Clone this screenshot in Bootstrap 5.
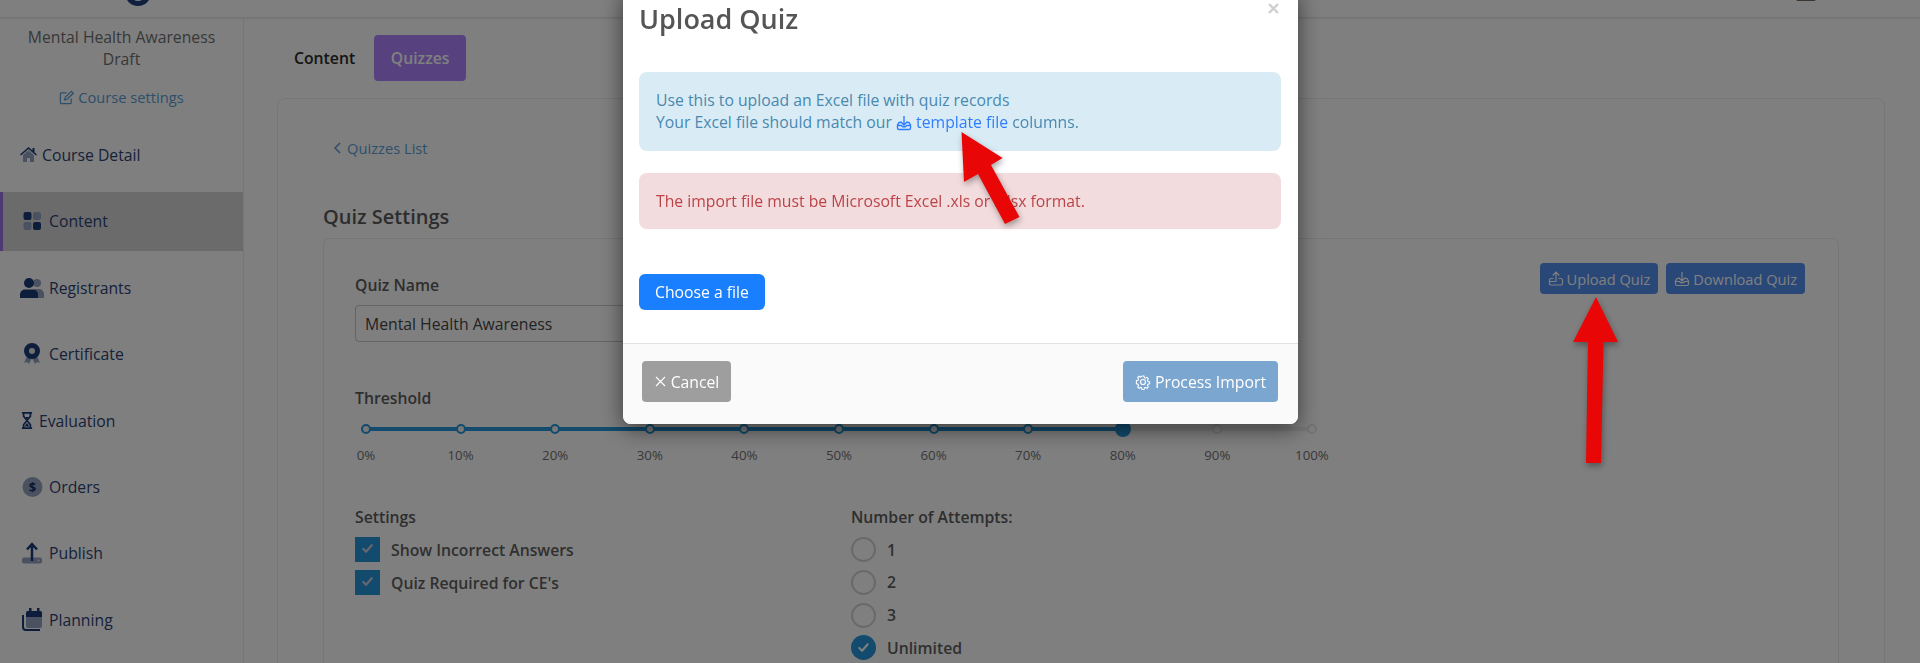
<!DOCTYPE html>
<html lang="en"><head><meta charset="utf-8"><title>Upload Quiz</title>
<link rel="stylesheet" href="https://cdn.jsdelivr.net/npm/bootstrap@5.3.0/dist/css/bootstrap.min.css">
<style>
html,body{height:663px;overflow:hidden}
body{font-family:"Open Sans",sans-serif;font-size:15.75px;line-height:22px;color:#646464;background:#fff}
.top-strip{height:18px;border-bottom:1px solid #e6e6e6;box-shadow:0 1px 3px rgba(0,0,0,.08);overflow:hidden;padding-left:124px}
.top-strip svg{display:block;margin-top:-20px}
.avatar-bit{width:20px;height:2px;border-radius:0 0 10px 10px;background:#7a6a5a;margin-left:1672px;margin-top:-7px}
.shell{height:645px;overflow:hidden}
.side{width:244px;flex:none;border-right:1px solid #ececec;padding-top:8px}
.side-title{color:#707070;width:220px;margin:0 auto;line-height:22px}
.side-link{color:#5a9fd8;text-decoration:none;font-size:14.7px;margin-top:16px;margin-bottom:18px}
.side-nav{gap:7.3px}
.side-entry{height:59px;padding-left:20px;gap:5px;color:#2c4474;text-decoration:none}
.side-entry.raised{padding-bottom:2px}
.side-entry.on{background:#d6d6d6;box-shadow:inset 3px 0 0 #9a74e8}
.main-col{padding:17px 0 0 33px}
.tab-row{gap:19px;padding-left:17px;margin-bottom:17px;height:46px}
.tab-plain{color:#2a2a2a;font-weight:600;text-decoration:none}
.tab-pill{width:92px;height:46px;background:#ae84ff;color:#fff;font-weight:600;text-decoration:none;border-radius:4px}
.outer-box{width:1608px;border:1px solid #ececec;border-radius:8px;padding:38px 45px 0;height:600px}
.back-link{color:#5a9fd8;text-decoration:none;font-size:14.7px;margin-left:10px;gap:5px;height:22px}
.sec-title{font-size:20px;line-height:27px;font-weight:600;color:#5a5a5a;margin:44px 0 8px;padding-top:0}
.inner-box{width:1516px;border:1px solid #ececec;border-radius:6px;padding:24px 33px 0 31px;height:500px}
.field-label{color:#5c5c5c;font-weight:600;line-height:22px}
.name-label{margin-top:11px}
.quiz-input{width:600px;height:37px;margin-top:9px;border:1px solid #c8c8c8;border-radius:4px;padding:0 9px;color:#464646;background:#fff;display:flex;align-items:center}
.mini-btn{height:31px;background:#5290f0;color:#fff;border:0;border-radius:4px;font-size:14.6px;padding:0 8px;gap:3px}
.mini-btn svg{flex:none}
.btn-pair{gap:8px}
.thresh{margin-top:45px}
.slide-row{width:946px;margin-left:11px;margin-top:15px;height:46px;background:linear-gradient(#2496dc,#2496dc) left 3px/80% 4px no-repeat,linear-gradient(#f0f0f0,#f0f0f0) left 3px/100% 4px no-repeat}
.tick{width:0;display:flex;flex-direction:column;align-items:center;position:relative}
.tick i{display:block;flex:none;width:10px;height:10px;border-radius:50%;border:2.5px solid #2496dc;background:#f0f0f0}
.tick.off i{border-color:#e6e6e6;background:#fff}
.tick.cur i{width:16px;height:16px;margin-top:-3px;background:#2496dc;margin-bottom:-3px}
.tick span{white-space:nowrap;font-size:13.3px;line-height:18px;margin-top:12px;color:#727272}
.two-col{margin-top:36px}
.col-left{width:496px}
.opt-list{margin-top:9px;gap:8px}
.opt-row{gap:11px;height:25px;margin:0;padding:0;font-weight:600;color:#606060}
.opt-row .form-check-input{margin:0;width:25px;height:25px;flex:none;border-radius:0;border:0;background-color:#2496dc;background-image:url("data:image/svg+xml,%3Csvg xmlns='http://www.w3.org/2000/svg' viewBox='0 0 16 16'%3E%3Cpath fill='none' stroke='%23ccd' stroke-width='2.4' stroke-linecap='round' stroke-linejoin='round' d='M3.5 8.5l3 3 6-7'/%3E%3C/svg%3E");background-size:15px;background-position:50% 35%;background-repeat:no-repeat;opacity:1}
.opt-list.three{gap:7.75px}
.opt-list.three .form-check-input{border-radius:50%;background-color:#fff;background-image:none;border:2px solid #d2d2d2}
.opt-list.three .form-check-input:checked{background-color:#2496dc;border:0;background-image:url("data:image/svg+xml,%3Csvg xmlns='http://www.w3.org/2000/svg' viewBox='0 0 16 16'%3E%3Cpath fill='none' stroke='%23fff' stroke-width='2.2' stroke-linecap='round' stroke-linejoin='round' d='M3.5 8.5l3 3 6-7'/%3E%3C/svg%3E");background-position:center}
.modal-backdrop.show{opacity:.5}
.upload-dialog{position:fixed;z-index:1055;left:623px;top:-12px;width:675px}
.upload-dialog .modal-content{background:#fff;border:0;border-radius:8px;box-shadow:0 5px 22px rgba(0,0,0,.55)}
.upload-dialog .modal-header{border:0;padding:12px 17px 0 16px;height:84px;align-items:flex-start;flex:none}
.dialog-title{font-size:27px;line-height:38px;font-weight:600;color:#555;margin:0}
.x-close{color:#d0d0d0;background:none;border:0;padding:0;margin:3px 2px 0 0;line-height:0}
.upload-dialog .modal-body{padding:0 17px 0 16px;height:271px;flex:none}
.note{border:0;border-radius:8px;margin:0;line-height:22px;padding:0 17px}
.note-info{height:79px;background:#d9ecf6;color:#4a88ae;padding-bottom:1px}
.note-info a{color:#2f7dff;text-decoration:none}
.note-info svg{vertical-align:-3px}
.note-bad{height:56px;margin-top:22px;background:#f3dcdd;color:#bc4347}
.pick-btn{width:126px;height:36px;margin-top:45px;background:#1a7fff;color:#fff;border:0;border-radius:6px;font-weight:500}
.upload-dialog .modal-footer{background:#fafafa;height:81px;flex:none;border-top:1px solid #e2e2e2;padding:0 20px 5px 19px;border-radius:0 0 8px 8px;align-items:center;justify-content:space-between}
.foot-btn{height:41px;border:0;border-radius:4px;color:#fff;margin:0;padding:0;gap:4px}
.foot-cancel{width:89px;background:#9e9e9e}
.foot-go{width:155px;background:#7ba6d0}
.arrow-layer{position:fixed;left:0;top:0;z-index:1060;pointer-events:none;filter:drop-shadow(1px 3px 3px rgba(0,0,0,.35))}
</style></head>
<body>
<div class="top-strip">
  <svg width="30" height="26" viewBox="0 0 30 26"><circle cx="14" cy="13" r="10.5" fill="none" stroke="#1d3f80" stroke-width="5"/></svg>
  <div class="avatar-bit"></div>
</div>
<div class="shell d-flex">
  <aside class="side">
    <div class="side-title text-center">Mental Health Awareness<br>Draft</div>
    <a href="#" class="side-link d-flex justify-content-center align-items-center gap-1">
      <svg width="15" height="15" viewBox="0 0 16 16" fill="none" stroke="currentColor" stroke-width="1.3"><path d="M13 9v4.500a1 1 0 0 1-1 1H2.500a1 1 0 0 1-1-1V4a1 1 0 0 1 1-1H8"/><path d="M6 10.500l.6-2.600 6.600-6.400 2 2-6.600 6.400z"/></svg>Course settings</a>
    <nav class="side-nav d-flex flex-column">
      <a href="#" class="side-entry raised d-flex align-items-center"><svg width="17" height="17" viewBox="0 0 17 17"><path d="M8.500 1L0 8.500l1 1 7.500-6.500 7.500 6.500 1-1-2.500-2.200V2h-2v2.500z" fill="#1a3a78"/><path d="M3 9l5.500-4.800L14 9v7h-4v-4H7v4H3z" fill="#95a3c0"/></svg>Course Detail</a>
      <a href="#" class="side-entry raised on d-flex align-items-center"><svg width="24" height="24" viewBox="0 0 24 24"><rect x="3.500" y="3" width="8" height="8" rx="2" fill="#1a3a78"/><rect x="13" y="3" width="8" height="8" rx="2" fill="#95a3c0"/><rect x="3.500" y="13" width="8" height="8" rx="2" fill="#95a3c0"/><rect x="13" y="13" width="8" height="8" rx="2" fill="#1a3a78"/></svg>Content</a>
      <a href="#" class="side-entry d-flex align-items-center"><svg width="24" height="21" viewBox="0 0 24 21"><circle cx="17" cy="5" r="4" fill="#95a3c0"/><path d="M14 11h5a5 5 0 0 1 5 5v4h-7v-5z" fill="#95a3c0"/><circle cx="9" cy="5" r="5" fill="#1a3a78"/><path d="M5 11.500h8a5 5 0 0 1 5 5V20H0v-3.500a5 5 0 0 1 5-5z" fill="#1a3a78"/></svg>Registrants</a>
      <a href="#" class="side-entry d-flex align-items-center"><svg width="24" height="24" viewBox="0 0 24 24"><path d="M7 14l-3 7 3-1 2 2 3-6 3 6 2-2 3 1-3-7z" fill="#95a3c0"/><circle cx="12" cy="9" r="5.500" fill="#e4e4e4" stroke="#1a3a78" stroke-width="5"/></svg>Certificate</a>
      <a href="#" class="side-entry d-flex align-items-center"><svg width="14" height="17" viewBox="0 0 14 20"><path d="M1 1h12M1 19h12M3 2v3l8 10v3M11 2v3L3 15v3" fill="none" stroke="#1a3a78" stroke-width="2"/><path d="M5 6h4L7 9zM4 17l3-4 3 4z" fill="#1a3a78"/></svg>Evaluation</a>
      <a href="#" class="side-entry d-flex align-items-center"><svg width="24" height="24" viewBox="0 0 24 24"><circle cx="12.500" cy="12" r="10" fill="#95a3c0"/><text x="12.500" y="16.500" text-anchor="middle" font-family="'Open Sans',sans-serif" font-size="13" font-weight="700" fill="#142c5c">$</text></svg>Orders</a>
      <a href="#" class="side-entry d-flex align-items-center"><svg width="24" height="24" viewBox="0 0 24 24"><rect x="2" y="16.500" width="20" height="6" rx="2" fill="#95a3c0"/><circle cx="18.500" cy="19.500" r="1" fill="#e8e8e8"/><path d="M12 20V4M7 8.500l5-5.500 5 5.500" fill="none" stroke="#1a3a78" stroke-width="2.500"/></svg>Publish</a>
      <a href="#" class="side-entry d-flex align-items-center"><svg width="24" height="24" viewBox="0 0 24 24"><path d="M3 7v12a3 3 0 0 0 3 3h14" fill="none" stroke="#1a3a78" stroke-width="2"/><rect x="6" y="3" width="16" height="17" rx="2" fill="#95a3c0"/><path d="M6 9V5a2 2 0 0 1 2-2h12a2 2 0 0 1 2 2v4zM9 0h2.500v4H9zM17 0h2.500v4H17z" fill="#1a3a78"/></svg>Planning</a>
    </nav>
  </aside>
  <main class="main-col flex-grow-1">
    <div class="tab-row d-flex align-items-center">
      <a href="#" class="tab-plain">Content</a>
      <a href="#" class="tab-pill d-flex align-items-center justify-content-center">Quizzes</a>
    </div>
    <div class="outer-box">
      <a href="#" class="back-link d-inline-flex align-items-center">
        <svg width="9" height="12" viewBox="0 0 9 12" fill="none" stroke="currentColor" stroke-width="1.500"><path d="M7 1L2 6l5 5"/></svg>Quizzes List</a>
      <h2 class="sec-title">Quiz Settings</h2>
      <div class="inner-box">
        <div class="d-flex justify-content-between align-items-start">
          <div>
            <div class="field-label name-label">Quiz Name</div>
            <div class="quiz-input">Mental Health Awareness</div>
          </div>
          <div class="d-flex btn-pair">
            <button class="mini-btn d-flex align-items-center"><svg width="16" height="16" viewBox="0 0 16 16" fill="none" stroke="currentColor" stroke-width="1.200"><path d="M8 10.500V1.500M4.700 4.500L8 1.200l3.300 3.300M5.500 7.500H3A1.500 1.500 0 0 0 1.500 9v3.500A1.500 1.500 0 0 0 3 14h10a1.500 1.500 0 0 0 1.500-1.500V9A1.500 1.500 0 0 0 13 7.500h-2.500M1.500 10.500H8"/></svg>Upload Quiz</button>
            <button class="mini-btn d-flex align-items-center"><svg width="16" height="16" viewBox="0 0 16 16" fill="none" stroke="currentColor" stroke-width="1.200"><path d="M8 1v9M4.500 6.500L8 10l3.500-3.500M5 7.500H3L1.500 10v3A1.500 1.500 0 0 0 3 14.500h10a1.500 1.500 0 0 0 1.500-1.500v-3L13 7.500h-2M1.500 10.500h4l1 1.200h3l1-1.200h4"/></svg>Download Quiz</button>
          </div>
        </div>
        <div class="field-label thresh">Threshold</div>
        <div class="slide-row d-flex justify-content-between">
          <div class="tick"><i></i><span>0%</span></div>
          <div class="tick"><i></i><span>10%</span></div>
          <div class="tick"><i></i><span>20%</span></div>
          <div class="tick"><i></i><span>30%</span></div>
          <div class="tick"><i></i><span>40%</span></div>
          <div class="tick"><i></i><span>50%</span></div>
          <div class="tick"><i></i><span>60%</span></div>
          <div class="tick"><i></i><span>70%</span></div>
          <div class="tick cur"><i></i><span>80%</span></div>
          <div class="tick off"><i></i><span>90%</span></div>
          <div class="tick off"><i></i><span>100%</span></div>
        </div>
        <div class="two-col d-flex">
          <div class="col-left">
            <div class="field-label">Settings</div>
            <div class="opt-list d-flex flex-column">
              <label class="form-check opt-row d-flex align-items-center"><input class="form-check-input" type="checkbox" checked>Show Incorrect Answers</label>
              <label class="form-check opt-row d-flex align-items-center"><input class="form-check-input" type="checkbox" checked>Quiz Required for CE's</label>
            </div>
          </div>
          <div>
            <div class="field-label">Number of Attempts:</div>
            <div class="opt-list three d-flex flex-column">
              <label class="form-check opt-row d-flex align-items-center"><input class="form-check-input" type="radio" name="att">1</label>
              <label class="form-check opt-row d-flex align-items-center"><input class="form-check-input" type="radio" name="att">2</label>
              <label class="form-check opt-row d-flex align-items-center"><input class="form-check-input" type="radio" name="att">3</label>
              <label class="form-check opt-row d-flex align-items-center"><input class="form-check-input" type="radio" name="att" checked>Unlimited</label>
            </div>
          </div>
        </div>
      </div>
    </div>
  </main>
</div>
<div class="modal-backdrop show"></div>
<div class="upload-dialog">
  <div class="modal-content">
    <div class="modal-header justify-content-between">
      <h3 class="dialog-title">Upload Quiz</h3>
      <button class="x-close" type="button" aria-label="Close"><svg width="11" height="11" viewBox="0 0 11 11" fill="none" stroke="currentColor" stroke-width="2.400"><path d="M1 1l9 9M10 1l-9 9"/></svg></button>
    </div>
    <div class="modal-body">
      <div class="note note-info d-flex flex-column justify-content-center">
        <div>Use this to upload an Excel file with quiz records</div>
        <div>Your Excel file should match our <a href="#"><svg width="16" height="16" viewBox="0 0 16 16" fill="none" stroke="currentColor" stroke-width="1.400"><path d="M8 1v9M4.500 6.500L8 10l3.500-3.500M5 7.500H3L1.500 10v3A1.500 1.500 0 0 0 3 14.500h10a1.500 1.500 0 0 0 1.500-1.500v-3L13 7.500h-2M1.500 10.500h4l1 1.200h3l1-1.200h4"/></svg> template file</a> columns.</div>
      </div>
      <div class="note note-bad d-flex align-items-center">The import file must be Microsoft Excel .xls or .xlsx format.</div>
      <button class="pick-btn" type="button">Choose a file</button>
    </div>
    <div class="modal-footer">
      <button class="foot-btn foot-cancel d-flex align-items-center justify-content-center" type="button"><svg width="13" height="13" viewBox="0 0 13 13" fill="none" stroke="currentColor" stroke-width="1.100"><path d="M2 2l9 9M11 2l-9 9"/></svg>Cancel</button>
      <button class="foot-btn foot-go d-flex align-items-center justify-content-center" type="button"><svg width="16" height="16" viewBox="0 0 16 16" fill="none" stroke="currentColor" stroke-width="1.200"><circle cx="8" cy="8" r="2.500"/><path d="M6.800 1h2.400l.4 2 1.300.6 1.800-1 1.600 1.700-1.100 1.700.6 1.400 2 .4v2.400l-2 .4-.6 1.400 1.100 1.700-1.600 1.700-1.800-1-1.300.6-.4 2H6.800l-.4-2-1.300-.6-1.800 1-1.600-1.700 1.100-1.700-.6-1.400-2-.4V6.400l2-.4.6-1.400-1.100-1.700 1.600-1.700 1.800 1 1.300-.6z" transform="translate(1.200 1.200) scale(.85)"/></svg>Process Import</button>
    </div>
  </div>
</div>
<svg class="arrow-layer" width="1920" height="663" viewBox="0 0 1920 663">
  <path d="M961.500 132L1002.600 158 991 165 1019.500 217 1005 224 978 174 964 182z" fill="#e90606"/>
  <path d="M1596 297L1618 342H1603.500L1601 463H1586L1588 342H1573z" fill="#e90606"/>
</svg>
<script src="https://cdn.jsdelivr.net/npm/bootstrap@5.3.0/dist/js/bootstrap.bundle.min.js"></script>
</body></html>
